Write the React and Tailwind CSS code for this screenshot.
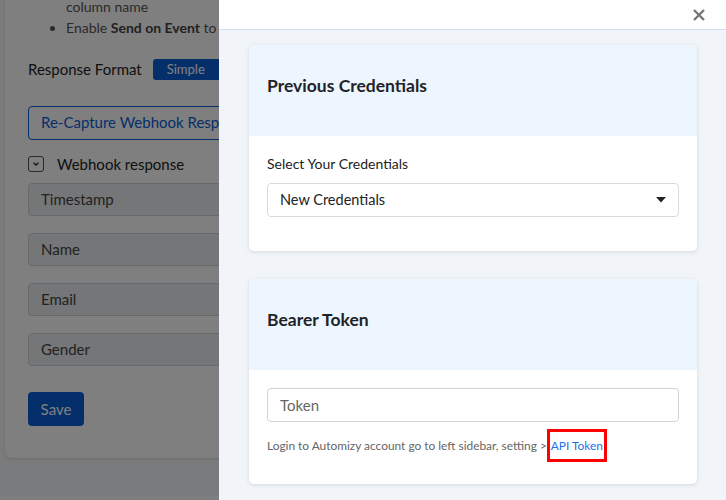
import React from 'react';

const fields = ['Timestamp', 'Name', 'Email', 'Gender'];

const BackgroundPage = () => (
  <div className="h-full bg-[#f5f6f8] pl-[5px] pr-[8px]">
    <div className="h-[462px] rounded-b-md bg-white pl-[23px] shadow-sm">
      {/* Instructions */}
      <ul className="-mt-[4px] list-disc pl-[38px] text-[14px] leading-[21px] text-[#555]">
        <li className="list-none">column name</li>
        <li>
          Enable <b className="text-[#444]">Send on Event</b> to
        </li>
      </ul>

      {/* Response Format */}
      <div className="mt-[20px] flex items-center gap-[11px]">
        <span className="text-[15px] text-[#222]">Response Format</span>
        <div className="flex">
          <span className="flex h-[21px] w-[66px] items-center justify-center rounded-l-[3px] bg-[#0b5ed7] text-[13px] text-white">
            Simple
          </span>
          <span className="h-[21px] w-[60px] rounded-r-[3px] border border-[#0b5ed7] bg-white" />
        </div>
      </div>

      <button className="mt-[25px] h-[34px] w-[240px] rounded-[4px] border border-[#0b5ed7] bg-white pl-[12px] text-left text-[15px] whitespace-nowrap text-[#0b5ed7]">
        Re-Capture Webhook Response
      </button>

      {/* Webhook response */}
      <div className="mt-[13px] flex items-center gap-[13px]">
        <span className="flex h-[16px] w-[16px] items-center justify-center rounded-[3px] border border-[#555] bg-white">
          <svg width="8" height="8" viewBox="0 0 10 10" fill="none" stroke="#222" strokeWidth="1.6">
            <path d="M2 3.5l3 3 3-3" />
          </svg>
        </span>
        <span className="text-[15px] text-[#222]">Webhook response</span>
      </div>

      <div className="mt-[8px] flex flex-col gap-[17px]">
        {fields.map((f) => (
          <div
            key={f}
            className="flex h-[33px] items-center rounded-[4px] border border-[#ced4da] bg-[#e9ecef] pl-[12px] text-[15px] text-[#444]"
          >
            {f}
          </div>
        ))}
      </div>

      <button className="mt-[26px] h-[34px] w-[56px] rounded-[4px] bg-[#0b5ed7] text-[15px] text-white">
        Save
      </button>
    </div>
  </div>
);

const Card = ({ title, children }) => (
  <div className="overflow-hidden rounded-[5px] bg-white shadow-[0_1px_4px_rgba(0,0,0,0.12)]">
    <div className="h-[91px] bg-[#edf5fe] pt-[30px] pl-[18px]">
      <h3 className="text-[17.5px] leading-[22px] font-bold text-[#1f2328]">{title}</h3>
    </div>
    <div className="px-[18px]">{children}</div>
  </div>
);

export default function App() {
  return (
    <div className="relative h-[500px] w-[726px] overflow-hidden font-['Lato',sans-serif]">
      <BackgroundPage />

      {/* Overlay */}
      <div className="absolute inset-0 bg-black/50" />

      {/* Drawer */}
      <div className="absolute top-0 right-0 flex h-full w-[507px] flex-col bg-[#f1f5f9]">
        <div className="flex h-[30px] shrink-0 items-center justify-end border-b border-[#d3e0f3] bg-white pr-[21px]">
          <svg width="12" height="12" viewBox="0 0 12 12" stroke="#777" strokeWidth="2.4" strokeLinecap="butt">
            <path d="M1 1l10 10M11 1L1 11" />
          </svg>
        </div>

        <div className="flex flex-col gap-[28px] pt-[15px] pr-[29px] pl-[30px]">
          <Card title="Previous Credentials">
            <div className="pt-[19px] pb-[34px]">
              <label className="block text-[14px] leading-[18px] text-[#222]">Select Your Credentials</label>
              <div className="mt-[10px] flex h-[34px] items-center justify-between rounded-[4px] border border-[#d5d9e0] pr-[12px] pl-[12px]">
                <span className="text-[14.5px] text-[#222]">New Credentials</span>
                <svg width="10" height="6" viewBox="0 0 10 6">
                  <path d="M0 0h10L5 5.5z" fill="#222" />
                </svg>
              </div>
            </div>
          </Card>

          <Card title="Bearer Token">
            <div className="pt-[18px] pb-[30px]">
              <div className="flex h-[34px] items-center rounded-[4px] border border-[#cfd4da] pl-[12px] text-[15px] text-[#666]">
                Token
              </div>
              <p className="mt-[16px] text-[11.9px] leading-[16px] whitespace-nowrap text-[#666]">
                Login to Automizy account go to left sidebar, setting &gt;
                <span className="border-[3px] border-[#ff0000] px-[1px] py-[6px] text-[#1a73e8]">API Token</span>
              </p>
            </div>
          </Card>
        </div>
      </div>
    </div>
  );
}
